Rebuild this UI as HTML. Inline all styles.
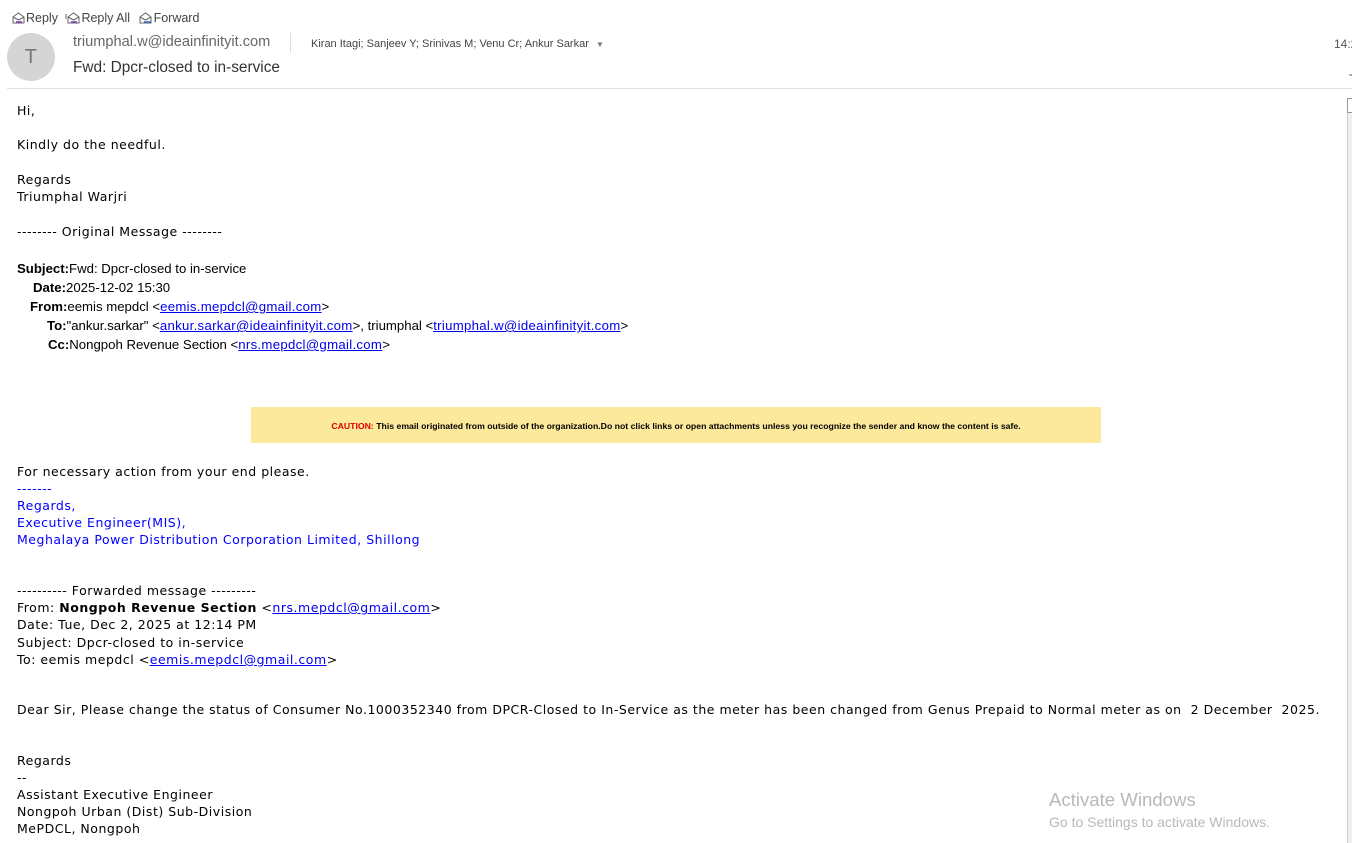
<!DOCTYPE html>
<html><head><meta charset="utf-8"><style>
body{margin:0;width:1352px;height:843px;overflow:hidden;background:#fff;position:relative;font-family:"DejaVu Sans",Verdana,sans-serif;font-size:12.5px;letter-spacing:0.52px;color:#000}
.a{position:absolute;white-space:nowrap;line-height:16px}
.h{font-family:"Liberation Sans",Arial,sans-serif;font-size:13.2px;letter-spacing:0}
.h a{letter-spacing:0.3px}
a{color:#0000ee;text-decoration:underline}
.b{color:#0000ff}
.t{font-family:"Liberation Sans",Arial,sans-serif;color:#444;font-size:12.5px;letter-spacing:0}
</style></head><body>
<div class="a t" style="left:11px;top:10px">
<svg width="15" height="13" style="vertical-align:-2px"><path d="M2 6 L7.5 2 L13 6 V12 H2Z M2 6 L7.5 9 L13 6" fill="none" stroke="#666"/><path d="M5 11 H11" stroke="#7a3fb0" stroke-width="1.5"/></svg>Reply
<span style="margin-left:4px"><svg width="16" height="13" style="vertical-align:-2px"><path d="M3 6 L8.5 2 L14 6 V12 H3Z M3 6 L8.5 9 L14 6 M1 8 V3" fill="none" stroke="#666"/><path d="M6 11 H12" stroke="#7a3fb0" stroke-width="1.5"/></svg>Reply All</span>
<span style="margin-left:4px"><svg width="16" height="13" style="vertical-align:-2px"><path d="M2 6 L7.5 2 L13 6 V12 H2Z M2 6 L7.5 9 L13 6" fill="none" stroke="#666"/><path d="M6 11 H13" stroke="#2f6fbf" stroke-width="1.5"/></svg>Forward</span></div>
<div style="position:absolute;left:7px;top:33px;width:48px;height:48px;border-radius:50%;background:#d5d5d5;color:#777;font-family:'Liberation Sans',sans-serif;font-size:20px;text-align:center;line-height:48px">T</div>
<div class="a" style="left:73px;top:34px;font-family:'Liberation Sans',sans-serif;font-size:14.6px;letter-spacing:0;color:#666">triumphal.w@ideainfinityit.com</div>
<div style="position:absolute;left:290px;top:33px;width:1px;height:20px;background:#ddd"></div>
<div class="a" style="left:311px;top:36px;font-family:'Liberation Sans',sans-serif;font-size:11px;letter-spacing:0;color:#444">Kiran Itagi; Sanjeev Y; Srinivas M; Venu Cr; Ankur Sarkar <span style="font-size:8px;color:#777;margin-left:4px">▼</span></div>
<div class="a" style="left:73px;top:60px;font-family:'Liberation Sans',sans-serif;font-size:15.4px;letter-spacing:0;color:#333">Fwd: Dpcr-closed to in-service</div>
<div class="a" style="left:1334px;top:36px;font-family:'Liberation Sans',sans-serif;font-size:12px;letter-spacing:0;color:#555">14:2</div>
<div class="a" style="left:1347px;top:66px;font-size:9px;color:#555">⌄</div>
<div style="position:absolute;left:7px;top:88px;width:1345px;height:1px;background:#e1e1e1"></div>
<div style="position:absolute;left:1347px;top:98px;width:6px;height:745px;background:#f0f0f0;border-left:1px solid #ccc"></div>
<div style="position:absolute;left:1347px;top:98px;width:6px;height:13px;border:1px solid #999;background:#fff"></div>

<div class="a" style="left:17px;top:103px">Hi,</div>
<div class="a" style="left:17px;top:137px">Kindly do the needful.</div>
<div class="a" style="left:17px;top:172px">Regards</div>
<div class="a" style="left:17px;top:189px">Triumphal Warjri</div>
<div class="a" style="left:17px;top:224px">-------- Original Message --------</div>

<div class="a h" style="left:17px;top:261px"><b>Subject:</b>Fwd: Dpcr-closed to in-service</div>
<div class="a h" style="left:33px;top:280px"><b>Date:</b>2025-12-02 15:30</div>
<div class="a h" style="left:30px;top:299px"><b>From:</b>eemis mepdcl &lt;<a>eemis.mepdcl@gmail.com</a>&gt;</div>
<div class="a h" style="left:47px;top:318px"><b>To:</b>"ankur.sarkar" &lt;<a>ankur.sarkar@ideainfinityit.com</a>&gt;, triumphal &lt;<a>triumphal.w@ideainfinityit.com</a>&gt;</div>
<div class="a h" style="left:48px;top:337px"><b>Cc:</b>Nongpoh Revenue Section &lt;<a>nrs.mepdcl@gmail.com</a>&gt;</div>

<div style="position:absolute;left:251px;top:407px;width:850px;height:36px;background:#fce99b;font-family:'Liberation Sans',Arial,sans-serif;font-size:8.7px;letter-spacing:0;font-weight:bold;line-height:38px;text-align:center"><span style="color:#e00000">CAUTION:</span> This email originated from outside of the organization.Do not click links or open attachments unless you recognize the sender and know the content is safe.</div>

<div class="a" style="left:17px;top:464px">For necessary action from your end please.</div>
<div class="a b" style="left:17px;top:481px">-------</div>
<div class="a b" style="left:17px;top:498px">Regards,</div>
<div class="a b" style="left:17px;top:515px">Executive Engineer(MIS),</div>
<div class="a b" style="left:17px;top:532px">Meghalaya Power Distribution Corporation Limited, Shillong</div>

<div class="a" style="left:17px;top:583px">---------- Forwarded message ---------</div>
<div class="a" style="left:17px;top:600px">From: <b>Nongpoh Revenue Section</b> &lt;<a>nrs.mepdcl@gmail.com</a>&gt;</div>
<div class="a" style="left:17px;top:617px">Date: Tue, Dec 2, 2025 at 12:14 PM</div>
<div class="a" style="left:17px;top:635px">Subject: Dpcr-closed to in-service</div>
<div class="a" style="left:17px;top:652px">To: eemis mepdcl &lt;<a>eemis.mepdcl@gmail.com</a>&gt;</div>

<div class="a" style="left:17px;top:702px">Dear Sir, Please change the status of Consumer No.1000352340 from DPCR-Closed to In-Service as the meter has been changed from Genus Prepaid to Normal meter as on&nbsp; 2 December&nbsp; 2025.</div>

<div class="a" style="left:17px;top:753px">Regards</div>
<div class="a" style="left:17px;top:770px">--</div>
<div class="a" style="left:17px;top:787px">Assistant Executive Engineer</div>
<div class="a" style="left:17px;top:804px">Nongpoh Urban (Dist) Sub-Division</div>
<div class="a" style="left:17px;top:821px">MePDCL, Nongpoh</div>

<div class="a" style="left:1049px;top:789px;font-family:'Liberation Sans',sans-serif;font-size:18.6px;letter-spacing:0;color:#b8b8b8;line-height:22px">Activate Windows</div>
<div class="a" style="left:1049px;top:814px;font-family:'Liberation Sans',sans-serif;font-size:14px;letter-spacing:0;color:#b8b8b8">Go to Settings to activate Windows.</div>
</body></html>
